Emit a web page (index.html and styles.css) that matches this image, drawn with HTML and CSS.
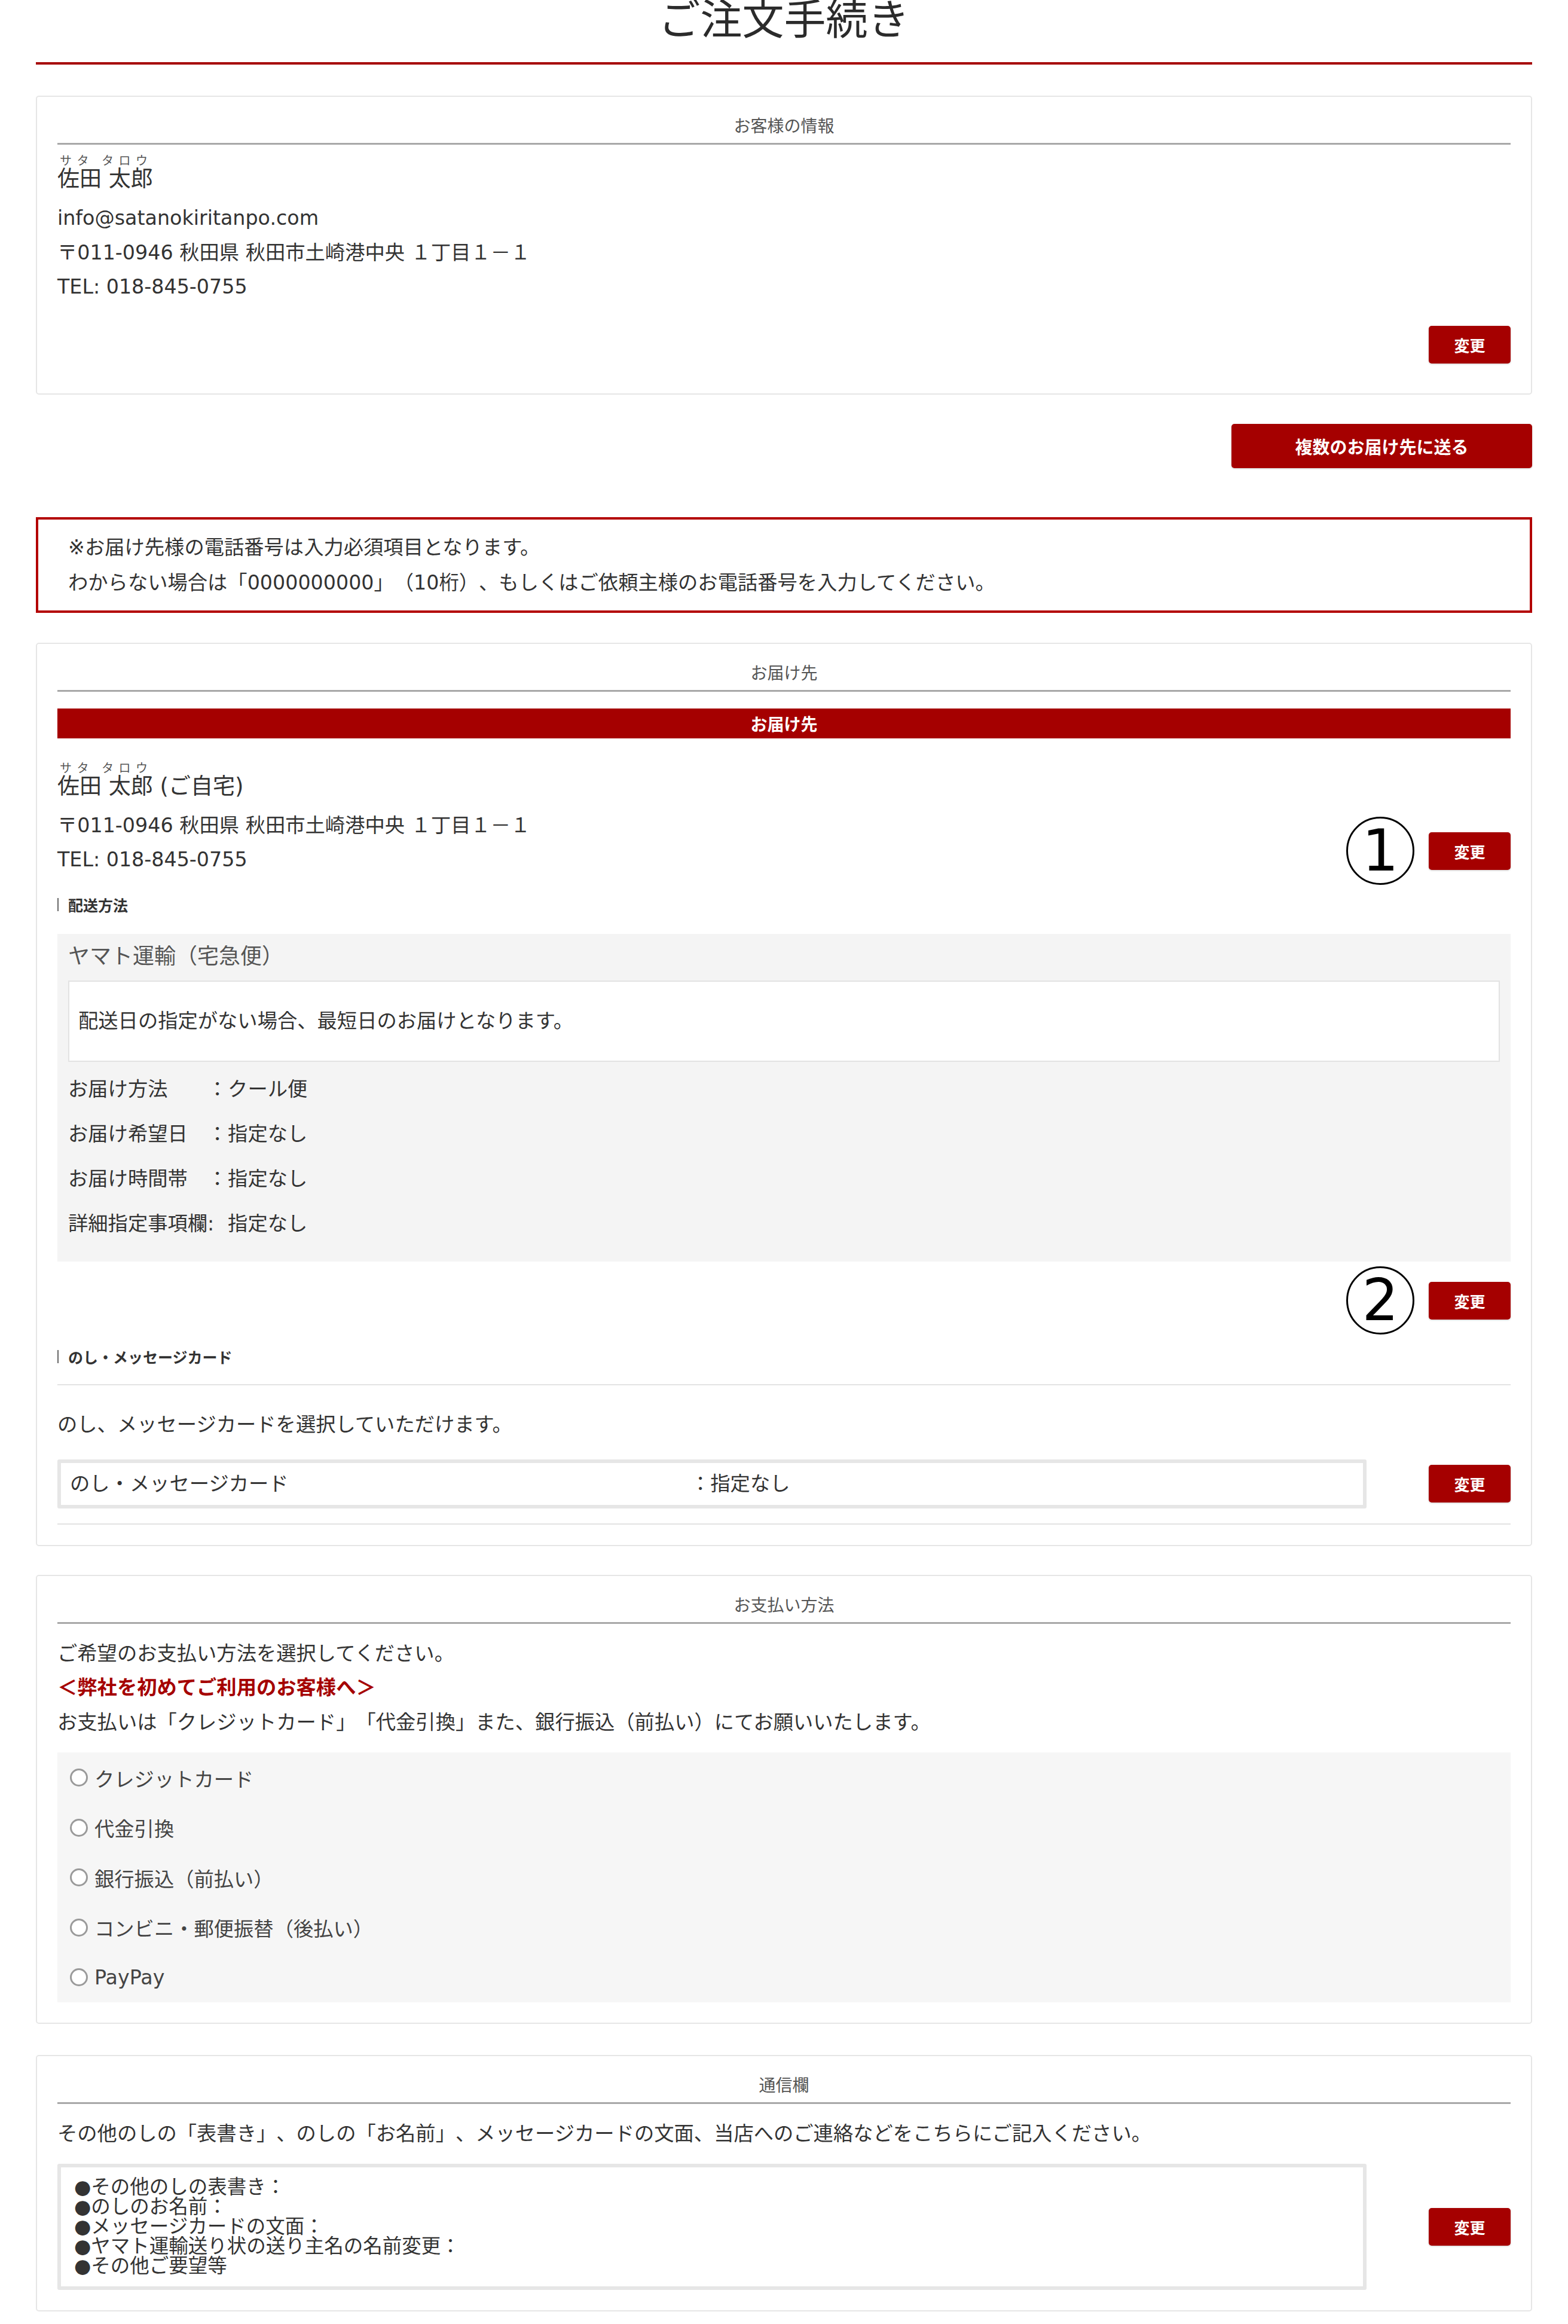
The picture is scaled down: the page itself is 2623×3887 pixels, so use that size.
FILE: index.html
```html
<!DOCTYPE html>
<html lang="ja">
<head>
<meta charset="utf-8">
<title>ご注文手続き</title>
<link rel="stylesheet" href="styles.css">
</head>
<body>
<div class="page">
  <h1 class="title">ご注文手続き</h1>

  <section class="card card-customer">
    <h2 class="card-head">お客様の情報</h2>
    <div class="person">
      <div class="kana">サタ タロウ</div>
      <p class="name">佐田 太郎</p>
      <p class="line">info@satanokiritanpo.com</p>
      <p class="line">〒011-0946 秋田県 秋田市土崎港中央 １丁目１－１</p>
      <p class="line">TEL: 018-845-0755</p>
    </div>
    <div class="actions"><button class="btn">変更</button></div>
  </section>

  <div class="multi-row"><button class="btn btn-wide">複数のお届け先に送る</button></div>

  <div class="notice">
    <p>※お届け先様の電話番号は入力必須項目となります。</p>
    <p>わからない場合は「0000000000」（10桁）、もしくはご依頼主様のお電話番号を入力してください。</p>
  </div>

  <section class="card card-dest">
    <h2 class="card-head">お届け先</h2>
    <div class="bar">お届け先</div>
    <div class="dest-row">
      <div class="person">
        <div class="kana">サタ タロウ</div>
        <p class="name">佐田 太郎 (ご自宅)</p>
        <p class="line">〒011-0946 秋田県 秋田市土崎港中央 １丁目１－１</p>
        <p class="line">TEL: 018-845-0755</p>
      </div>
      <div class="btn-wrap btn-wrap-dest">
        <span class="mark">1</span>
        <button class="btn">変更</button>
      </div>
    </div>

    <div class="sub-label">配送方法</div>
    <div class="ship-box">
      <div class="ship-name">ヤマト運輸（宅急便）</div>
      <div class="ship-note">配送日の指定がない場合、最短日のお届けとなります。</div>
      <div class="ship-rows">
        <div class="ship-row"><span class="k">お届け方法</span><span class="c">：</span><span class="v">クール便</span></div>
        <div class="ship-row"><span class="k">お届け希望日</span><span class="c">：</span><span class="v">指定なし</span></div>
        <div class="ship-row"><span class="k">お届け時間帯</span><span class="c">：</span><span class="v">指定なし</span></div>
        <div class="ship-row"><span class="k">詳細指定事項欄</span><span class="c c-half">:</span><span class="v">指定なし</span></div>
      </div>
    </div>
    <div class="btn-row">
      <div class="btn-wrap">
        <span class="mark">2</span>
        <button class="btn">変更</button>
      </div>
    </div>

    <div class="sub-label sub-label-noshi">のし・メッセージカード</div>
    <div class="rule"></div>
    <p class="plain noshi-text">のし、メッセージカードを選択していただけます。</p>
    <div class="field-row">
      <div class="field">
        <span class="field-k">のし・メッセージカード</span>
        <span class="field-v">：指定なし</span>
      </div>
      <button class="btn">変更</button>
    </div>
    <div class="rule rule-end"></div>
  </section>

  <section class="card card-pay">
    <h2 class="card-head">お支払い方法</h2>
    <div class="pay-text">
      <p class="plain">ご希望のお支払い方法を選択してください。</p>
      <p class="plain warn">＜弊社を初めてご利用のお客様へ＞</p>
      <p class="plain">お支払いは「クレジットカード」「代金引換」また、銀行振込（前払い）にてお願いいたします。</p>
    </div>
    <div class="pay-box">
      <label class="pay-opt"><span class="radio"></span>クレジットカード</label>
      <label class="pay-opt"><span class="radio"></span>代金引換</label>
      <label class="pay-opt"><span class="radio"></span>銀行振込（前払い）</label>
      <label class="pay-opt"><span class="radio"></span>コンビニ・郵便振替（後払い）</label>
      <label class="pay-opt"><span class="radio"></span>PayPay</label>
    </div>
  </section>

  <section class="card card-msg">
    <h2 class="card-head">通信欄</h2>
    <p class="plain msg-intro">その他のしの「表書き」、のしの「お名前」、メッセージカードの文面、当店へのご連絡などをこちらにご記入ください。</p>
    <div class="field-row msg-row">
      <div class="msg">●その他のしの表書き：<br>●のしのお名前：<br>●メッセージカードの文面：<br>●ヤマト運輸送り状の送り主名の名前変更：<br>●その他ご要望等</div>
      <button class="btn">変更</button>
    </div>
  </section>
</div>
</body>
</html>
```

FILE: styles.css
```css
* { box-sizing: border-box; }

body {
  margin: 0;
  background: #fff;
  color: #333;
  font-family: "DejaVu Sans", "Noto Sans CJK JP", sans-serif;
  text-spacing-trim: space-all;
}

p { margin: 0; }

.page {
  margin: 0 60px;
  padding-bottom: 18px;
}

.title {
  margin: -7px 0 0;
  font-family: "Noto Sans CJK JP", sans-serif;
  font-size: 70px;
  line-height: 70px;
  font-weight: 400;
  text-align: center;
  color: #2b2b2b;
  padding-bottom: 41px;
  border-bottom: 4px solid #a50000;
}

.card {
  border: 2px solid #e6e6e6;
  border-radius: 5px;
  padding: 34px;
  margin-top: 50px;
}

.card-customer { margin-top: 52px; }
.card-pay { margin-top: 48px; }
.card-msg { margin-top: 52px; }

.card-head {
  margin: 0;
  font-family: "Noto Sans CJK JP", sans-serif;
  font-size: 28px;
  line-height: 26px;
  font-weight: 400;
  color: #555;
  text-align: center;
  padding-bottom: 17px;
  border-bottom: 3px solid #a8a8a8;
}

/* person blocks */
.kana {
  margin-top: 16px;
  padding-left: 4px;
  font-family: "Noto Sans CJK JP", sans-serif;
  font-size: 20px;
  line-height: 20px;
  letter-spacing: 8.5px;
  color: #555;
}

.name {
  font-size: 37px;
  line-height: 43px;
  margin: 0 0 15px;
}

.line {
  font-size: 33.3px;
  line-height: 57.6px;
}

.actions {
  display: flex;
  justify-content: flex-end;
  margin-top: 36px;
  margin-bottom: 16px;
}

.btn {
  width: 137px;
  height: 63px;
  padding: 0;
  background: #a50000;
  color: #fff;
  border: 0;
  border-radius: 5px;
  font-family: "Noto Sans CJK JP", sans-serif;
  font-size: 26px;
  font-weight: 700;
  box-shadow: 0 1px 3px rgba(0, 0, 0, 0.2);
}

.multi-row {
  display: flex;
  justify-content: flex-end;
  margin-top: 49px;
}

.btn-wide {
  width: 503px;
  height: 74px;
  font-size: 29px;
}

.notice {
  margin-top: 82px;
  border: 4px solid #b30000;
  padding: 17px 50px;
  font-size: 33.3px;
  line-height: 59px;
}

/* destination */
.bar {
  margin-top: 28px;
  height: 50px;
  background: #a50000;
  color: #fff;
  font-family: "Noto Sans CJK JP", sans-serif;
  font-size: 28px;
  line-height: 50px;
  font-weight: 700;
  text-align: center;
}

.dest-row {
  display: flex;
  justify-content: space-between;
  align-items: flex-end;
}

.dest-row .kana { margin-top: 39px; }

.btn-wrap {
  position: relative;
  display: flex;
}

.btn-wrap-dest { margin-bottom: 12px; }

.mark {
  position: absolute;
  right: calc(100% + 24px);
  top: 50%;
  transform: translateY(-50%);
  width: 114px;
  height: 114px;
  border: 3px solid #000;
  border-radius: 50%;
  display: flex;
  align-items: center;
  justify-content: center;
  font-family: "DejaVu Sans", sans-serif;
  font-weight: 400;
  font-size: 96px;
  line-height: 1;
  color: #000;
}

.sub-label {
  margin-top: 35px;
  font-family: "Noto Sans CJK JP", sans-serif;
  font-size: 25px;
  line-height: 22px;
  font-weight: 700;
  color: #333;
  border-left: 2px solid #666;
  padding-left: 16px;
}

.ship-box {
  margin-top: 38px;
  background: #f4f4f4;
  padding: 8px 18px 26px;
}

.ship-name {
  font-size: 36px;
  line-height: 60px;
  color: #555;
}

.ship-note {
  margin-top: 10px;
  background: #fff;
  border: 2px solid #e3e3e3;
  padding: 38px 15px;
  font-size: 33.3px;
  line-height: 56px;
}

.ship-rows { margin-top: 8px; }

.ship-row {
  display: flex;
  font-size: 33.3px;
  line-height: 75px;
  white-space: nowrap;
}

.ship-row .k { flex: none; width: 7em; }
.ship-row .c { flex: none; width: 34px; text-align: left; }

.btn-row {
  display: flex;
  justify-content: flex-end;
  margin-top: 34px;
}

.sub-label-noshi { margin-top: 51px; }

.rule {
  margin-top: 35px;
  border-top: 2px solid #e3e3e3;
}

.plain {
  font-size: 33.3px;
  line-height: 57.6px;
}

.noshi-text { margin-top: 37px; }

.field-row {
  display: grid;
  grid-template-columns: 1fr 137px;
  column-gap: 104px;
  align-items: center;
  margin-top: 29px;
}

.field {
  border: 6px solid #e6e6e6;
  border-radius: 3px;
  padding: 0 15px;
  display: grid;
  grid-template-columns: 1038px 1fr;
  font-size: 33.3px;
  line-height: 70px;
}

.rule-end { margin-top: 25px; }

/* payment */
.pay-text { margin-top: 21px; }

.warn {
  color: #a50000;
  font-weight: 700;
  font-size: 33.3px;
}

.pay-box {
  margin-top: 22px;
  background: #f6f6f6;
  padding: 0 21px;
}

.pay-opt {
  display: flex;
  align-items: center;
  height: 83.5px;
  font-size: 33.3px;
  color: #444;
}

.radio {
  width: 30px;
  height: 30px;
  border: 3px solid #9a9a9a;
  border-radius: 50%;
  background: #fff;
  margin-right: 11px;
  flex: none;
}

/* message */
.msg-intro { margin-top: 21px; }

.msg-row { margin-top: 22px; }

.msg {
  border: 6px solid #e6e6e6;
  border-radius: 3px;
  padding: 17px 22px;
  font-size: 32.5px;
  line-height: 33px;
}
```
